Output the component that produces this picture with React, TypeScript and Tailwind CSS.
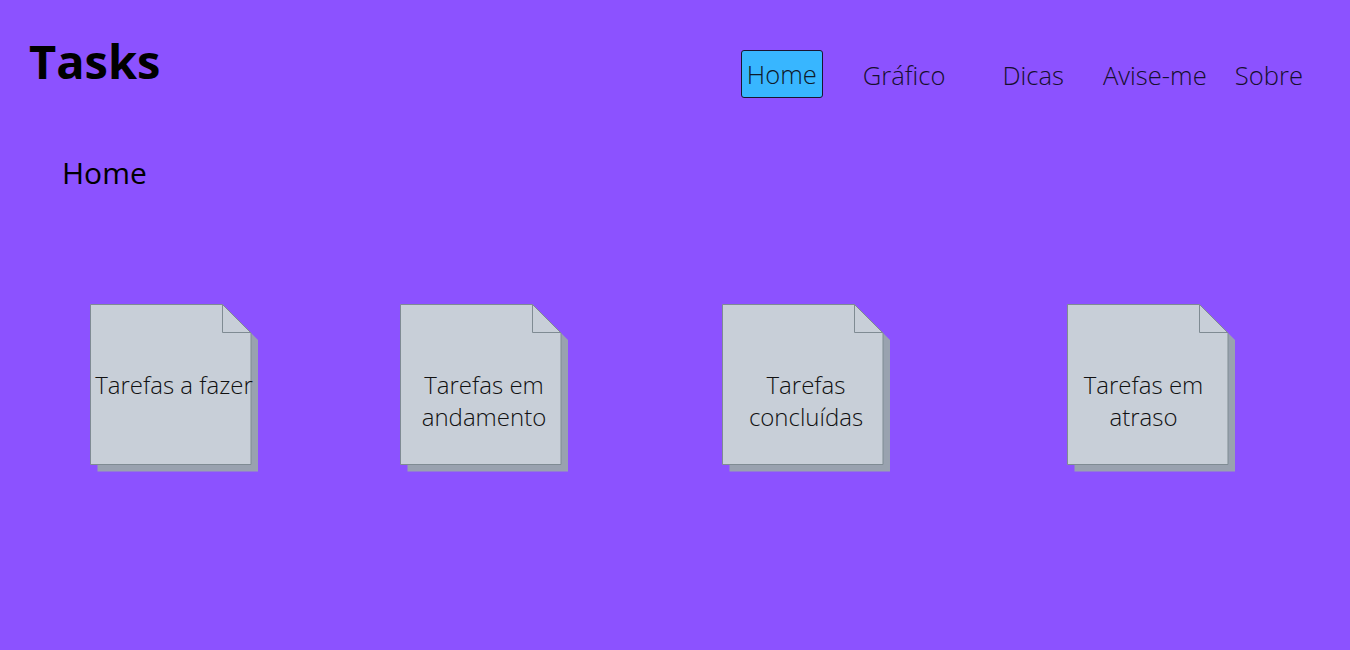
import React from 'react';

const cards = [
    { lines: ['Tarefas a fazer'], ml: 'ml-[90px]', shift: '' },
    { lines: ['Tarefas em', 'andamento'], ml: 'ml-[142px]', shift: '' },
    { lines: ['Tarefas', 'concluídas'], ml: 'ml-[154px]', shift: '' },
    { lines: ['Tarefas em', 'atraso'], ml: 'ml-[177px]', shift: 'pr-[15px]' },
];

function NoteCard({ lines, ml, shift }: { lines: string[]; ml: string; shift: string }) {
    return (
        <div className={`relative w-[168px] h-[168px] shrink-0 ${ml}`}>
            <svg className="absolute inset-0" width="168" height="168" viewBox="0 0 168 168">
                <polygon points="7.5,7.5 139.5,7.5 168,36 168,167.5 7.5,167.5" fill="#99a2af" />
                <polygon points="0.5,0.5 132.5,0.5 161,29 161,160.5 0.5,160.5" fill="#c8cfd8" stroke="#7f8b93" strokeWidth="1" />
                <polyline points="132.5,0.5 132.5,28.5 161,28.5" fill="none" stroke="#7f8b93" strokeWidth="1" />
            </svg>
            <div className={`relative flex flex-col items-center pt-[65px] text-[24px] leading-[32px] font-light text-[#111111] whitespace-nowrap ${shift}`}>
                {lines.map((l) => (
                    <span key={l}>{l}</span>
                ))}
            </div>
        </div>
    );
}

export default function App() {
    return (
        <div className="min-h-screen bg-[#8c52ff] font-['Open_Sans',sans-serif] overflow-hidden">
            <header className="flex items-start justify-between pl-[29px] pr-[47px] h-[97px]">
                <h1 className="mt-[30px] text-[47px] leading-[62px] font-bold text-black">Tasks</h1>
                <nav className="mt-[50px] flex items-center h-[48px] text-[25.6px] font-light text-[#160f2e]">
                    <a className="flex items-center justify-center w-[82px] h-[48px] pt-[3px] bg-[#38b6ff] border-[1.5px] border-[#1a1530] rounded-[3px] text-[#0f1a2a]">
                        Home
                    </a>
                    <a className="ml-[40px] pt-[4px]">Gráfico</a>
                    <a className="ml-[57px] pt-[4px]">Dicas</a>
                    <a className="ml-[39px] pt-[4px]">Avise-me</a>
                    <a className="ml-[28px] pt-[4px]">Sobre</a>
                </nav>
            </header>

            <h2 className="mt-[56px] pl-[62px] text-[30px] leading-[40px] font-normal text-black">Home</h2>

            <div className="mt-[111px] flex">
                {cards.map((c) => (
                    <NoteCard key={c.lines.join(' ')} lines={c.lines} ml={c.ml} shift={c.shift} />
                ))}
            </div>
        </div>
    );
}
